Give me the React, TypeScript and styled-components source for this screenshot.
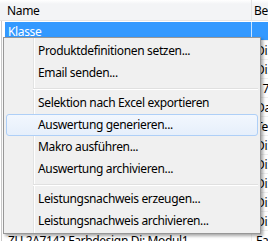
import React from 'react';
import styled, { createGlobalStyle, css } from 'styled-components';

const GlobalStyle = createGlobalStyle`
    html, body {
        margin: 0;
        padding: 0;
        background: #ffffff;
    }
    body {
        font-family: "Noto Sans", "Open Sans", sans-serif;
        font-size: 12px;
        letter-spacing: -0.35px;
        color: #000000;
    }
`;

const Screen = styled.div`
    position: relative;
    width: 268px;
    height: 241px;
    overflow: hidden;
    background: #ffffff;
`;

const HeaderBar = styled.div`
    display: grid;
    grid-template-columns: 252px 1fr;
    height: 21px;
    box-sizing: border-box;
    border-bottom: 1px solid #e5e5e5;
    background: linear-gradient(to bottom, #ffffff 0%, #f3f4f6 20%, #f3f4f6 100%);
`;

const HeaderCell = styled.div<{ divider?: boolean }>`
    display: flex;
    align-items: center;
    padding-left: ${props => (props.divider ? '7px' : '2px')};
    white-space: nowrap;
    overflow: hidden;
    ${props => props.divider && css`
        border-right: 1px solid #e3e3e3;
    `}
`;

const Rows = styled.div`
    margin-left: 1px;
    padding-left: 3px;
    padding-top: 1px;
    border-left: 1px solid #c9c9c9;
`;

const Row = styled.div<{ selected?: boolean }>`
    display: grid;
    grid-template-columns: 247px 1fr;
    height: 19px;
    box-sizing: border-box;
    border-bottom: 1px solid #f0f0f0;
    white-space: nowrap;
    ${props => props.selected && css`
        background: #3399ff;
        color: #ffffff;
    `}
`;

const Cell = styled.div<{ first?: boolean; selected?: boolean }>`
    display: flex;
    align-items: center;
    overflow: hidden;
    padding-left: ${props => (props.first ? '3px' : '4px')};
    ${props => props.first && css`
        border-right: 1px solid ${props.selected ? 'rgba(255,255,255,0.75)' : '#f0f0f0'};
    `}
`;

const Menu = styled.div`
    position: absolute;
    left: 3px;
    top: 37px;
    width: 258px;
    box-sizing: border-box;
    padding: 2px 2px 1px 2px;
    border: 1px solid #979797;
    background-color: #f0f0f0;
    background-image: linear-gradient(
        to right,
        transparent 29px,
        #e2e3e3 29px,
        #e2e3e3 30px,
        #ffffff 30px,
        #ffffff 31px,
        transparent 31px
    );
    box-shadow: 2px 2px 3px rgba(0, 0, 0, 0.35);
`;

const MenuItem = styled.div<{ hot?: boolean }>`
    height: 22px;
    box-sizing: border-box;
    padding-left: 31px;
    border: 1px solid transparent;
    border-radius: 3px;
    line-height: 20px;
    white-space: nowrap;
    ${props => props.hot && css`
        border-color: #aecff7;
        background: linear-gradient(to bottom, #f2f7fe 0%, #e6effb 100%);
    `}
`;

const Separator = styled.div`
    height: 1px;
    margin: 4px 0 2px 27px;
    background: #e0e0e0;
    border-bottom: 1px solid #ffffff;
`;

type Entry = { label?: string; hot?: boolean };

const menuEntries: Entry[] = [
    { label: 'Produktdefinitionen setzen...' },
    { label: 'Email senden...' },
    {},
    { label: 'Selektion nach Excel exportieren' },
    { label: 'Auswertung generieren...', hot: true },
    { label: 'Makro ausführen...' },
    { label: 'Auswertung archivieren...' },
    {},
    { label: 'Leistungsnachweis erzeugen...' },
    { label: 'Leistungsnachweis archivieren...' },
];

// rows 1..10 sit under the menu, only their second column peeks out
const rows = [
    ['Klasse', ''],
    ['', 'Di: Modul1'],
    ['', 'Di: Modul1'],
    ['', '17.09.2012'],
    ['', 'Datum'],
    ['', 'Test'],
    ['', 'Di: Modul1'],
    ['', 'Di: Modul1'],
    ['', 'Di: Modul1'],
    ['', 'Di: Modul1'],
    ['', 'Di: Modul1'],
    ['ZU 2A7142 Farbdesign Di: Modul1', 'Farbdesign'],
];

export default function App() {
    return (
        <>
            <GlobalStyle />
            <Screen>
                <HeaderBar>
                    <HeaderCell divider>Name</HeaderCell>
                    <HeaderCell>Bezeichnung</HeaderCell>
                </HeaderBar>
                <Rows>
                    {rows.map((row, i) => (
                        <Row key={i} selected={i === 0}>
                            <Cell first selected={i === 0}>{row[0]}</Cell>
                            <Cell>{row[1]}</Cell>
                        </Row>
                    ))}
                </Rows>
                <Menu>
                    {menuEntries.map((entry, i) =>
                        entry.label ? (
                            <MenuItem key={i} hot={entry.hot}>{entry.label}</MenuItem>
                        ) : (
                            <Separator key={i} />
                        )
                    )}
                </Menu>
            </Screen>
        </>
    );
}
